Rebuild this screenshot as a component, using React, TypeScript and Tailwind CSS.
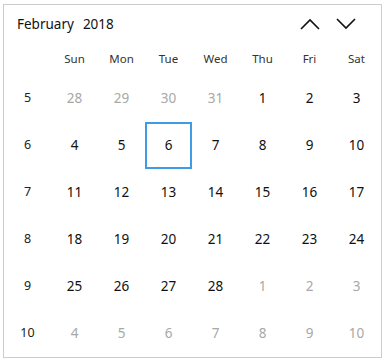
import React from 'react';

type Cell = { day: number; muted?: boolean; selected?: boolean };

const weekDays = ['Sun', 'Mon', 'Tue', 'Wed', 'Thu', 'Fri', 'Sat'];

const weeks: { num: number; days: Cell[] }[] = [
  { num: 5, days: [{ day: 28, muted: true }, { day: 29, muted: true }, { day: 30, muted: true }, { day: 31, muted: true }, { day: 1 }, { day: 2 }, { day: 3 }] },
  { num: 6, days: [{ day: 4 }, { day: 5 }, { day: 6, selected: true }, { day: 7 }, { day: 8 }, { day: 9 }, { day: 10 }] },
  { num: 7, days: [{ day: 11 }, { day: 12 }, { day: 13 }, { day: 14 }, { day: 15 }, { day: 16 }, { day: 17 }] },
  { num: 8, days: [{ day: 18 }, { day: 19 }, { day: 20 }, { day: 21 }, { day: 22 }, { day: 23 }, { day: 24 }] },
  { num: 9, days: [{ day: 25 }, { day: 26 }, { day: 27 }, { day: 28 }, { day: 1, muted: true }, { day: 2, muted: true }, { day: 3, muted: true }] },
  { num: 10, days: [{ day: 4, muted: true }, { day: 5, muted: true }, { day: 6, muted: true }, { day: 7, muted: true }, { day: 8, muted: true }, { day: 9, muted: true }, { day: 10, muted: true }] },
];

const Chevron: React.FC<{ up?: boolean }> = ({ up }) => (
  <svg width="20" height="12" viewBox="0 0 20 12" fill="none" stroke="#111" strokeWidth="1.6">
    {up ? <polyline points="1,11 10,2 19,11" /> : <polyline points="1,1 10,10 19,1" />}
  </svg>
);

export default function App() {
  return (
    <div className="w-[385px] h-[362px] bg-white pt-[4px] pl-[3px]" style={{ fontFamily: '"Noto Sans", "Open Sans", sans-serif' }}>
      <div className="w-[379px] h-[354px] border border-[#cccccc] flex flex-col">
        {/* Header */}
        <div className="h-[38px] flex items-center justify-between pl-[13px] pr-[25px]">
          <div className="text-[13.5px] text-[#111] flex gap-[9px]">
            <span>February</span>
            <span>2018</span>
          </div>
          <div className="flex items-center gap-[16px]">
            <Chevron up />
            <Chevron />
          </div>
        </div>

        {/* Day names */}
        <div className="grid grid-cols-[repeat(8,47px)] h-[33px] items-center text-[11.5px] text-[#333]">
          <span />
          {weekDays.map((d) => (
            <span key={d} className="text-center">{d}</span>
          ))}
        </div>

        {/* Weeks */}
        {weeks.map((w) => (
          <div key={w.num} className="grid grid-cols-[repeat(8,47px)] h-[47px] items-center text-[13.5px]">
            <span className="text-center text-[12.5px] text-[#222]">{w.num}</span>
            {w.days.map((c, i) => (
              <div
                key={i}
                className={`h-[47px] flex items-center justify-center ${c.selected ? 'border-2 border-[#3f9be3]' : ''} ${c.muted ? 'text-[#a8a8a8]' : 'text-[#111]'}`}
              >
                {c.day}
              </div>
            ))}
          </div>
        ))}
      </div>
    </div>
  );
}
